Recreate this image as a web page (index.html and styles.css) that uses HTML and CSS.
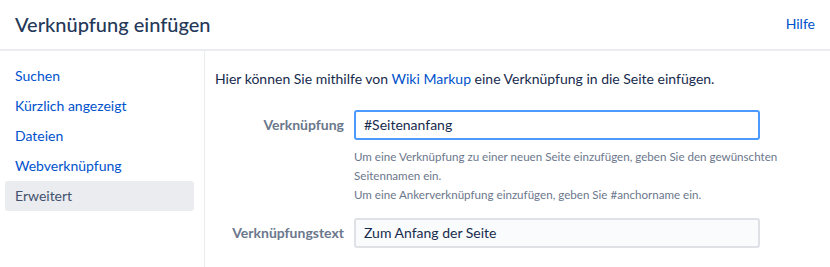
FILE: index.html
```html
<!DOCTYPE html>
<html lang="de">
<head>
<meta charset="utf-8">
<title>Verknüpfung einfügen</title>
<link rel="stylesheet" href="styles.css">
</head>
<body>
<div class="dialog">
  <header class="dialog-header">
    <h1 class="dialog-title">Verknüpfung einfügen</h1>
    <a class="help-link" href="#">Hilfe</a>
  </header>
  <div class="dialog-body">
    <nav class="sidebar">
      <a class="nav-item" href="#">Suchen</a>
      <a class="nav-item" href="#">Kürzlich angezeigt</a>
      <a class="nav-item" href="#">Dateien</a>
      <a class="nav-item" href="#">Webverknüpfung</a>
      <a class="nav-item selected" href="#">Erweitert</a>
    </nav>
    <main class="content">
      <p class="intro">Hier können Sie mithilfe von <a href="#">Wiki Markup</a> eine Verknüpfung in die Seite einfügen.</p>
      <div class="field">
        <label class="field-label">Verknüpfung</label>
        <div class="field-main">
          <div class="input focused">#Seitenanfang</div>
          <div class="help">Um eine Verknüpfung zu einer neuen Seite einzufügen, geben Sie den gewünschten<br>Seitennamen ein.<br>Um eine Ankerverknüpfung einzufügen, geben Sie #anchorname ein.</div>
        </div>
      </div>
      <div class="field">
        <label class="field-label">Verknüpfungstext</label>
        <div class="field-main">
          <div class="input">Zum Anfang der Seite</div>
        </div>
      </div>
    </main>
  </div>
</div>
</body>
</html>
```
FILE: styles.css
```css
* { box-sizing: border-box; }
html, body { margin: 0; padding: 0; background: #fff; }
body {
  font-family: "Lato", "Noto Sans", sans-serif;
  color: #172b4d;
  font-size: 14px;
}
a { color: #0052cc; text-decoration: none; }

.dialog-header {
  height: 51px;
  display: flex;
  align-items: center;
  justify-content: space-between;
  padding: 0 15px 2px 15px;
  border-bottom: 2px solid #ebecf0;
}
.dialog-title {
  margin: 0;
  font-size: 20px;
  font-weight: 500;
  color: #253858;
}
.help-link { font-size: 14px; color: #0052cc; }

.dialog-body {
  display: flex;
  height: 216px;
}
.sidebar {
  width: 205px;
  border-right: 1px solid #ebecf0;
  padding: 10px 10px 0 5px;
  display: flex;
  flex-direction: column;
}
.nav-item {
  height: 30px;
  line-height: 30px;
  padding-left: 10px;
  border-radius: 3px;
  color: #0052cc;
}
.nav-item.selected {
  background: #ebecf0;
  color: #42526e;
}

.content {
  flex: 1;
  padding: 18px 0 0 10px;
}
.intro {
  margin: 0 0 21px 0;
  line-height: 20px;
}
.field {
  display: flex;
  gap: 10px;
  margin-bottom: 14px;
}
.field-label {
  width: 129px;
  text-align: right;
  font-weight: 700;
  color: #6b778c;
  line-height: 30px;
}
.field-main { width: 406px; }
.input {
  height: 30px;
  line-height: 26px;
  padding: 0 8px;
  border: 2px solid #dfe1e6;
  border-radius: 3px;
  background: #fafbfc;
  color: #172b4d;
}
.input.focused {
  border-color: #4c9aff;
  background: #fff;
}
.help {
  width: 460px;
  margin-top: 7px;
  font-size: 11.6px;
  line-height: 19px;
  color: #6b778c;
}
```
